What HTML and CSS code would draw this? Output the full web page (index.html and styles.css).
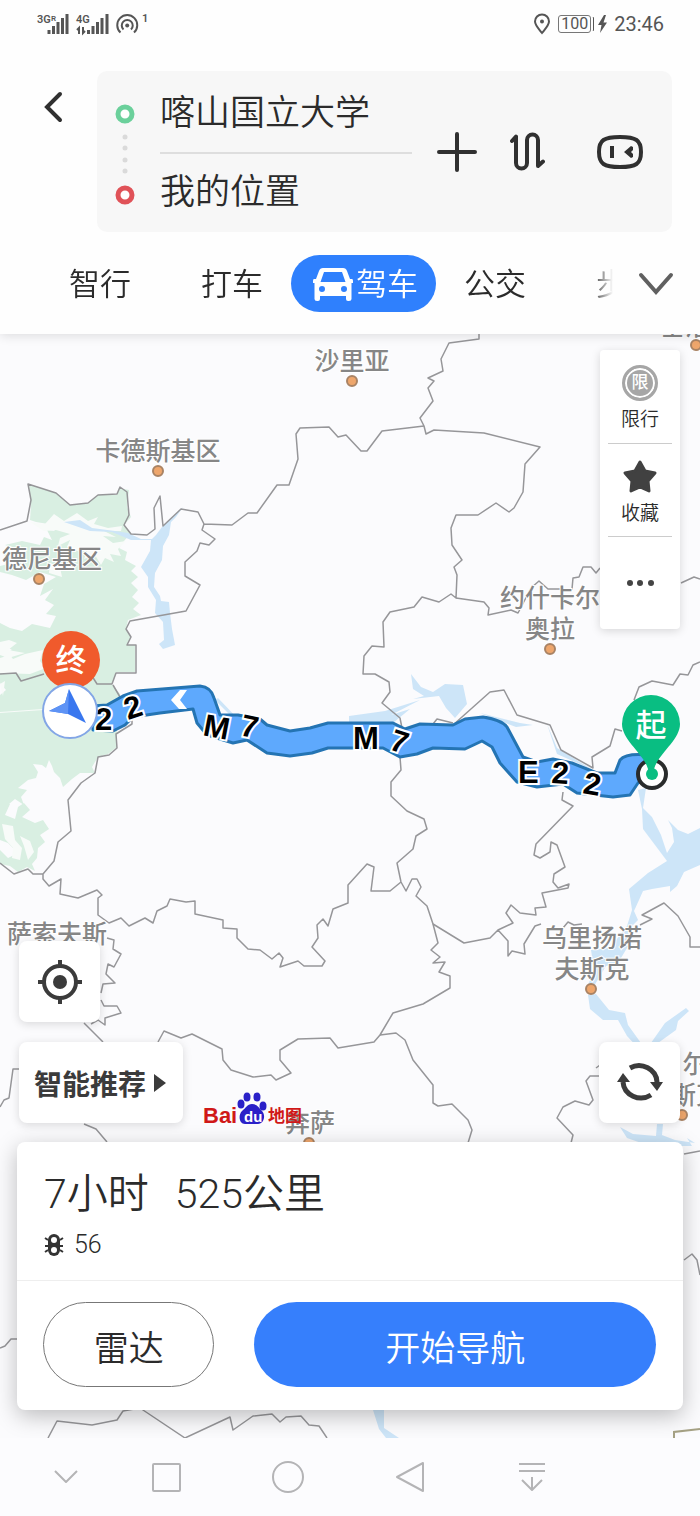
FILE: index.html
```html
<!DOCTYPE html>
<html lang="zh-CN">
<head>
<meta charset="utf-8">
<meta name="viewport" content="width=device-width, initial-scale=1">
<title>驾车路线</title>
<link rel="stylesheet" href="styles.css">
</head>
<body>
<div class="app">
  <header class="header">
    <div class="status">
      <svg class="status-left" width="112" height="26" viewBox="36 11 112 26" aria-hidden="true">
        <g class="tiny">
          <text x="37" y="23">3G</text><text x="51" y="21" class="micro">R</text>
          <text x="76" y="23">4G</text><text x="142" y="22">1</text>
        </g>
        <path class="bars" d="M49 30v4M53.500 26v8M58 22v12M62.500 18v16M67 14v20M88.500 30v4M93 26v8M97.500 22v12M102 18v16M107 14v20"/>
        <path class="thin" d="M79 34v-6l-2 2M83 27v6l2-2"/>
        <path class="wave" d="M120.500 32.500a10 10 0 1 1 13.500 0M123.500 29.500a5.500 5.500 0 1 1 7.500 0"/>
        <circle cx="127.200" cy="25.500" r="2" fill="#555"/>
      </svg>
      <div class="status-right">
        <svg width="18" height="22" viewBox="0 0 18 22" aria-hidden="true"><path class="wave" d="M9 20C5 15 2 12 2 8.500a7 7 0 0 1 14 0C16 12 13 15 9 20Z"/><circle cx="9" cy="8.500" r="2" fill="#555"/></svg>
        <span class="battery">100</span>
        <svg width="9" height="18" viewBox="0 0 9 18" aria-hidden="true"><path d="M6 0 0 10h3.500L2 18l7-10.500H5.500L8 0Z" fill="#555"/></svg>
        <span class="clock">23:46</span>
      </div>
    </div>

    <div class="search-row">
      <button class="icon-btn back" aria-label="返回"><svg width="20" height="32" viewBox="0 0 20 32"><path class="dark-line" d="M16 3 3 16l13 13"/></svg></button>
      <form class="search">
        <svg class="ends" width="22" height="106" viewBox="0 0 22 106" aria-hidden="true">
          <circle cx="11" cy="15" r="7" fill="#fff" stroke="#6bd09b" stroke-width="5"/>
          <g fill="#dadada"><circle cx="11" cy="38" r="2.500"/><circle cx="11" cy="49" r="2.500"/><circle cx="11" cy="61" r="2.500"/><circle cx="11" cy="72" r="2.500"/></g>
          <circle cx="11" cy="96" r="7" fill="#fff" stroke="#e05258" stroke-width="5"/>
        </svg>
        <div class="fields">
          <input aria-label="起点" value="喀山国立大学">
          <input aria-label="终点" value="我的位置">
        </div>
        <button type="button" class="icon-btn" aria-label="添加途经点"><svg width="40" height="40" viewBox="0 0 40 40"><path class="dark-line" d="M20 2v36M2 20h36"/></svg></button>
        <button type="button" class="icon-btn" aria-label="交换起终点"><svg width="36" height="40" viewBox="0 0 36 40"><path d="M2 9 6 4.500V31a5.500 5.500 0 0 0 11 0V8a5.500 5.500 0 0 1 11 0V34l5-4.500" fill="none" stroke="#303030" stroke-width="4" stroke-linecap="round" stroke-linejoin="round"/></svg></button>
        <button type="button" class="icon-btn" aria-label="语音助手"><svg width="48" height="36" viewBox="0 0 48 36"><path d="M24 3C40 3 45 6 45 18S40 33 24 33 3 30 3 18 8 3 24 3Z" fill="none" stroke="#303030" stroke-width="4"/><path d="M14 12h4v12h-4zM37 13v3l-2 2 2 2v3l-2 1-7-6 7-6Z" fill="#303030"/></svg></button>
      </form>
    </div>

    <nav class="tabs-row">
      <div class="tabs">
        <button class="tab">智行</button>
        <button class="tab">打车</button>
        <button class="tab active"><svg width="40" height="34" viewBox="0 0 40 34" aria-hidden="true"><path fill="#fff" fill-rule="evenodd" d="M10 0H30Q33 0 34 3L37 11H39Q40 11 40 13V15H38.500V31Q38.500 33 36 33H35Q33 33 33 31V28H7V31Q7 33 5 33H4Q1.500 33 1.500 31V15H0V13Q0 11 1 11H3L6 3Q7 0 10 0ZM11 4 7.500 14H32.500L29 4ZM9 18A3 3 0 1 0 9 24 3 3 0 1 0 9 18ZM31 18A3 3 0 1 0 31 24 3 3 0 1 0 31 18Z"/></svg>驾车</button>
        <button class="tab">公交</button>
        <button class="tab">步行</button>
      </div>
      <button class="icon-btn" aria-label="更多方式"><svg width="38" height="26" viewBox="0 0 38 26"><path d="m4 4 15 17L34 4" fill="none" stroke="#606060" stroke-width="4" stroke-linecap="round"/></svg></button>
    </nav>
  </header>

  <main class="map">
    <svg class="map-canvas" viewBox="0 334 700 1104" preserveAspectRatio="xMidYMin slice" role="img" aria-label="路线地图">
      <path class="forest" d="M29 484 56 493 70 505 88 503 98 495 117 495 119 488 129 490 127 507 131 517 124 525 131 533 124 541 119 548 127 552 125 560 136 566 131 571 138 577 131 583 138 590 132 597 139 603 133 609 141 615 128 620 126 629 131 637 127 645 135 645V672H116L112 684 120 694V702L117 712V747L108 754 98 757 92 767 95 773 80 773 72 779 63 787 60 778 54 772 52 766 49 760 46 768 42 765 33 764 38 772 36 778 28 780 18 788 27 790 21 797 24 805 15 799 9 804 4 813 0 815V695L6 690 0 683V655L12 650 0 642V623L10 628 22 631 32 624 50 628 56 616 46 614 54 605 45 600 53 589 40 596 44 584 56 577 40 572 26 580 12 575 0 572V566L12 563 2 553 20 550 5 545 22 541 40 545 44 537 52 540 47 530 55 531 48 524 36 522 30 520 31 505Z"/>
      <path class="clear" d="M30 522 45 524 54 514 64 521 77 513 88 521 98 517 94 524 108 528 122 526 121 531 104 531 116 537 103 536 113 543 126 541 118 549 121 556 110 554 114 562 105 558 101 565 95 555 84 559 88 549 80 552 67 547 70 540 58 546 60 538 70 534 56 530 44 531ZM90 533 98 537 92 543ZM0 658 10 655 13 659 25 654 43 650 40 661 46 668 30 674 0 673ZM0 684 5 681 3 696ZM0 642 9 640 17 643 8 650 25 653 8 658 0 655ZM50 563 60 567 62 577 49 573Z"/>
      <path class="forest" d="M0 803 10 804 5 815 15 819 18 807 24 803 30 810 22 817 35 823 43 820 49 829 40 835 45 842 38 848 37 858 32 864 35 871 27 867 18 872 10 866 0 864V850L8 858 18 853 8 843 0 840Z"/>
      <path class="clear" d="M2 824 13 826 15 840 22 848 20 860 12 858 13 848 5 839ZM20 836 30 841 34 852 28 860 24 846ZM0 712 43 709V710L0 713Z"/>
      <path class="river" d="M64 522 80 520 92 528 115 531 128 533 141 539 152 539 156 535 162 527 183 507 176 517 171 522 169 535 163 546 162 560 155 573 154 587 160 596 161 601 169 602 170 613 172 629 175 645 163 649 159 644 164 640 163 622 155 613 156 600 148 587 148 577 141 567 150 551 151 540 131 540 112 532 90 531Z"/>
      <path class="river" d="M411 674 421 687 433 692 445 684 463 685 467 704 455 718 446 708 439 696 413 699 424 696 413 689ZM349 716 385 711 420 700 391 715 410 709 393 723H349ZM480 713 520 723 533 725 516 727ZM547 724 557 748 593 770 557 754ZM218 698 240 721 237 722 215 700ZM638 790 646 788 643 808 652 817 661 835 667 853 674 842 672 828 668 820 678 830 688 834 700 828V865L684 872 677 886 670 892V886L652 889 643 891 639 900 634 911 638 920 628 930 630 943 618 963 606 966 594 986 588 985 594 970 591 950 610 948 627 926 632 910 629 889 648 873 667 861 643 829 642 809Z"/>
      <path class="river" d="M588 995 596 994 609 1010 625 1013 628 1025 646 1050 665 1023 686 1008 689 1011 678 1021 676 1030 658 1043 640 1050 627 1036 618 1020 603 1020 590 1009ZM620 1127 633 1134 656 1136 657 1124 663 1124 662 1135 675 1140 695 1143 687 1138 692 1146H650L627 1138ZM373 1410H384V1428L399 1438H386L379 1429Z"/>
      <path class="border" d="M479 334V339L449 343 441 359 443 371 428 378 434 381 428 388 433 401 420 418 424 426 426 434 434 430 484 433 540 447 525 464 523 492 514 508 509 512 496 503 478 515H456L451 528 452 545 462 560 454 567 457 575 456 598 451 594 439 602 422 597 414 607 390 612 383 622 384 647 372 646 364 656 363 674 375 674 389 682 390 692 382 703 400 718 402 728M400 757 401 770 391 782V796L407 811 424 819 427 829 416 836 413 849 397 863 401 882 406 891 412 879 417 879 421 887 416 896 427 906 433 924 438 943 431 950 440 957 433 963 445 962 439 972 450 976V988L423 1004 393 1013 380 1035 374 1042 338 1048 330 1038 298 1039 280 1050 280 1060 291 1073 276 1080 271 1075 253 1077 231 1070 223 1060 222 1049 192 1034 181 1038 164 1031 158 1042"/>
      <path class="border" d="M424 426 382 431 367 451 361 451 346 435 338 437 329 427 300 428 296 434 298 459 289 485 277 485 257 513 248 513 232 525 204 524 198 512 181 509 163 526 160 496 154 508 155 529 147 535 131 534 124 525 129 515 127 492 120 487 117 494 98 495 88 503 70 505 56 493 28 484 31 500 27 521 0 530M204 524 202 530 215 539 209 545 200 543 197 551 185 562V576L200 585 186 611 130 621 126 629 131 637 127 645 136 645V673H116L112 684H97L92 676M113 685 120 697M132 717V724L116 734 117 748 109 755 98 757 95 773 81 783 68 800 71 831 58 842 54 861 43 874 43 879 49 886 61 879 60 894 78 898 97 890 102 895 98 898 98 915 109 923 121 918 129 926 145 918 153 923 157 911 167 906 170 899 186 902 195 901 195 914 223 920 223 928 237 929 237 938 248 949 260 950 272 959 279 953 283 958 280 967 298 961 304 966H322L325 961 312 947 318 938 317 925 323 919 328 926 333 909 348 903V885L367 864 374 867 371 891H390L401 882M0 863 14 874 28 869 33 874H43M0 674 16 673 21 681 44 674"/>
      <path class="border" d="M456 598 484 602 489 608 488 615 511 610 518 613 531 588 539 581 548 589 572 589 573 578 579 577 583 567 591 567 596 573 600 568M681 583 694 577 700 579M634 700 639 687 652 681 673 685 680 674 688 675 693 665 700 662M453 725 490 692 504 690 517 715 550 725 561 750 593 768 592 757 610 746 615 729 622 731M433 724 437 719 453 723M563 792 562 800 573 806 536 844 534 855 540 858 550 852 551 842 557 845 565 867 554 874 553 882 558 888 569 884 568 888 542 893 546 907 535 908 536 915 520 913 511 905 506 913 513 923 498 930 508 941 508 956 512 951 525 954 524 944 535 926 541 924M498 930 490 938 464 943 433 924M563 928 568 922 574 925 582 924M640 925 652 919 642 915 664 903 678 916 690 937V947H700M380 1035 396 1033 405 1040 413 1060 433 1085 433 1103 438 1106 452 1104 468 1120 472 1130 468 1143M600 1076H590L586 1081 593 1100 589 1105 575 1101 563 1107 557 1118 573 1135 571 1143M600 1065 596 1068"/>
      <path class="border" d="M107 938 114 940 113 949 121 954 114 967 108 964 106 974 115 983 103 984 101 993M101 1000 104 1006 117 1006 121 1013 105 1018V1025L98 1020 91 1024M84 1023 103 1042M0 1107 4 1100 9 1098 13 1069H20M84 1124 96 1129 107 1142M0 1348 5 1346 11 1339H17M684 1260 692 1254 697 1260 700 1275M684 1154 700 1151M48 1438 57 1421 92 1425 117 1420 123 1411 140 1408 185 1438 230 1417 233 1430 253 1416 272 1414 280 1422 286 1417 301 1416 309 1425 319 1426 327 1438"/>
      <path d="M674 1438V1432L700 1429" fill="none" stroke="#a5a184" stroke-width="2"/>

      <path class="route" d="M92 706 107 705 123 696 137 691 200 686Q211 687 214 698L220 715 238 715 260 719 267 725 290 731 310 728 328 723 393 723 405 729 420 724 453 725 465 719 483 717Q502 720 507 727L523 757 537 762 553 759 572 763 597 773 615 773 620 760Q626 753 647 755L652 772 638 783 630 795 613 797 577 793 563 784 537 787 517 782 500 763 492 747 482 741 465 749 433 748 417 754 400 757 383 748 328 748 312 753 290 756 267 753 247 740 233 743 207 735 197 723 193 709 160 713 133 717 125 725 113 731 93 730Z"/>
      <path d="M180 690h7l-7 10 7 9h-8l-8-9Z" fill="#fff"/>
      <g class="road">
        <text x="95" y="730">2</text>
        <text transform="translate(128 720) rotate(-18)">2</text>
        <text transform="translate(202 735) rotate(11)">M</text>
        <text transform="translate(239 735) rotate(12)">7</text>
        <text x="353" y="749">M</text>
        <text transform="translate(388 749) rotate(18)">7</text>
        <text x="518" y="783">E</text>
        <text transform="translate(551 783) rotate(4)">2</text>
        <text transform="translate(582 793) rotate(10)">2</text>
      </g>

      <g class="place">
        <text x="352" y="370">沙里亚</text>
        <text x="158" y="460">卡德斯基区</text>
        <text x="52" y="568">德尼基区</text>
        <text x="550" y="607">约什卡尔</text><text x="550" y="638">奥拉</text>
        <text x="57" y="943">萨索夫斯</text>
        <text x="592" y="947">乌里扬诺</text><text x="592" y="978">夫斯克</text>
        <text x="310" y="1132">奔萨</text>
        <text x="695" y="1073">尔</text><text x="696" y="1104">斯克</text>
        <text x="685" y="335">基洛</text>
      </g>
      <g class="town"><circle cx="352" cy="381" r="5"/><circle cx="158" cy="471" r="5"/><circle cx="39" cy="579" r="5"/><circle cx="550" cy="649" r="5"/><circle cx="591" cy="989" r="5"/><circle cx="309" cy="1143" r="5"/><circle cx="682" cy="1115" r="5"/><circle cx="696" cy="345" r="5"/></g>

      <circle cx="71" cy="660" r="29" fill="#f05a2c"/>
      <text class="pin-text" x="71" y="671">终</text>
      <circle cx="70" cy="711" r="27" fill="#fff" stroke="#83a6e6" stroke-width="2"/>
      <path d="M69 689 86 723 68 714 49 711 65 703Z" fill="#3977ef"/>
      <path d="M69 689 68 714 49 711 65 703Z" fill="#5e93f5"/>
      <circle cx="652" cy="774" r="14" fill="#fff" stroke="#292b2c" stroke-width="4"/>
      <path d="M651 695a29 29 0 0 0-29 29c0 16 22 30 26 45v6h6v-6c4-15 26-29 26-45a29 29 0 0 0-29-29Z" fill="#09be82"/>
      <circle cx="652" cy="774" r="6" fill="#09be82"/>
      <text class="pin-text" x="651" y="736">起</text>

      <g class="logo">
        <text x="203" y="1123">Bai</text>
        <g fill="#2a20c8"><ellipse cx="241" cy="1104" rx="3.500" ry="4.500"/><ellipse cx="247" cy="1097" rx="3.500" ry="4.500"/><ellipse cx="257" cy="1097" rx="3.500" ry="4.500"/><ellipse cx="263" cy="1106" rx="3.500" ry="4.500"/><path d="M252 1104c5 0 7 4 10 7 4 4 2 13-4 13h-13c-6 0-7-9-3-13 4-3 5-7 10-7Z"/></g>
        <text class="du" x="244" y="1122">du</text>
        <text class="ditu" x="268" y="1122">地图</text>
      </g>
    </svg>

    <aside class="tools">
      <button class="tool"><span class="limit" aria-hidden="true">限</span>限行</button>
      <button class="tool"><svg width="36" height="36" viewBox="0 0 36 36" aria-hidden="true"><path d="m18 3 5 9 10 2-7 8 1 10-9-4-9 4 1-10-7-8 10-2Z" fill="#414141" stroke="#414141" stroke-width="3" stroke-linejoin="round"/></svg>收藏</button>
      <button class="tool" aria-label="更多"><svg width="28" height="8" viewBox="0 0 28 8"><g fill="#444"><circle cx="4" cy="4" r="3"/><circle cx="14" cy="4" r="3"/><circle cx="25" cy="4" r="3"/></g></svg></button>
    </aside>

    <div class="bottom">
      <button class="float square" aria-label="定位"><svg width="44" height="44" viewBox="0 0 44 44"><circle cx="22" cy="22" r="16" fill="none" stroke="#3b3b3b" stroke-width="4"/><path d="M22 0v8M22 36v8M0 22h8M36 22h8" stroke="#3b3b3b" stroke-width="4"/><circle cx="22" cy="22" r="7" fill="#3b3b3b"/></svg></button>
      <div class="float-row">
        <button class="float prefer">智能推荐<svg width="12" height="20" viewBox="0 0 12 20" aria-hidden="true"><path d="m0 1 12 9-12 9Z" fill="#3b3b3b"/></svg></button>
        <button class="float square" aria-label="刷新"><svg width="46" height="42" viewBox="0 0 46 42"><path d="M13 6A18 17 0 0 1 40 20M34 33A18 17 0 0 1 6 20" fill="none" stroke="#3b3b3b" stroke-width="5"/><path d="M33 20h13l-6 9ZM0 20 6 11l7 9Z" fill="#3b3b3b"/></svg></button>
      </div>
      <section class="card">
        <div class="summary">
          <h1 class="total"><span>7小时</span><span>525公里</span></h1>
          <p class="lights"><svg width="20" height="22" viewBox="0 0 20 22" aria-hidden="true"><path d="M1 4l3 2M19 4l-3 2M1 12h3M19 12h-3M1 18l3-2M19 18l-3-2" stroke="#333" stroke-width="2"/><rect x="4" y="0" width="12" height="22" rx="6" fill="#333"/><circle cx="10" cy="6" r="3" fill="#fff"/><circle cx="10" cy="16" r="3" fill="#fff"/></svg>56</p>
        </div>
        <div class="actions">
          <button class="pill radar">雷达</button>
          <button class="pill start">开始导航</button>
        </div>
      </section>
    </div>
  </main>

  <nav class="sysbar" aria-label="系统导航">
    <button class="icon-btn" aria-label="收起"><svg width="34" height="34" viewBox="0 0 34 34"><path class="sys" d="m6 11 11 11 11-11"/></svg></button>
    <button class="icon-btn" aria-label="最近任务"><svg width="34" height="34" viewBox="0 0 34 34"><rect class="sys" x="4" y="4" width="27" height="27" rx="1"/></svg></button>
    <button class="icon-btn" aria-label="主页"><svg width="34" height="34" viewBox="0 0 34 34"><circle class="sys" cx="17" cy="17" r="15"/></svg></button>
    <button class="icon-btn" aria-label="后退"><svg width="34" height="34" viewBox="0 0 34 34"><path class="sys" d="M30 3v28L4 17Z"/></svg></button>
    <button class="icon-btn" aria-label="通知"><svg width="34" height="34" viewBox="0 0 34 34"><path class="sys" d="M4 4h26M4 11h26M17 17v13M7 20l10 10 10-10"/></svg></button>
  </nav>
</div>
</body>
</html>
```
FILE: styles.css
```css
* { box-sizing: border-box; }
body {
  margin: 0;
  font-family: Roboto, "Noto Sans CJK SC", sans-serif;
  font-weight: 350;
  color: #2b2b2b;
  background: #fcfcfe;
}
button, input {
  font: inherit;
  color: inherit;
  border: 0;
  padding: 0;
  margin: 0;
  background: none;
}
.app { min-height: 100vh; display: flex; flex-direction: column; }
.icon-btn { display: flex; align-items: center; justify-content: center; flex: none; }
.dark-line { fill: none; stroke: #303030; stroke-width: 4; stroke-linecap: round; }

.header {
  position: relative;
  z-index: 1;
  background: #fefefe;
  box-shadow: 0 2px 10px rgba(0, 0, 0, .12);
  padding-bottom: 22px;
}
.status {
  height: 48px;
  padding: 0 36px;
  display: flex;
  align-items: center;
  justify-content: space-between;
  color: #555;
}
.status-right { display: flex; align-items: center; gap: 7px; font-weight: 400; }
.tiny { font-size: 11px; font-weight: 600; fill: #555; }
.micro { font-size: 8px; }
.bars { stroke: #555; stroke-width: 3; fill: none; }
.thin { stroke: #555; stroke-width: 2; fill: none; }
.wave { stroke: #555; stroke-width: 2; fill: none; }
.battery {
  font-size: 16px;
  line-height: 16px;
  border: 1px solid #777;
  border-radius: 3px;
  padding: 0 2px;
  box-shadow: 3px 0 0 -1px #fefefe, 5px 0 0 -2px #555;
}
.clock { font-size: 20px; }

.search-row { display: flex; padding: 23px 28px 0 44px; align-items: flex-start; }
.back { width: 20px; margin: 20px 33px 0 0; }
.search {
  flex: 1;
  min-width: 0;
  height: 161px;
  display: flex;
  align-items: center;
  background: #f7f7f7;
  border-radius: 10px;
  padding: 0 28px 0 17px;
}
.search .icon-btn + .icon-btn { margin-left: 33px; }
.search .icon-btn:last-child { margin-left: 50px; }
.ends { flex: none; }
.fields { flex: 1; min-width: 0; margin: 0 25px 0 24px; }
.fields input { display: block; width: 100%; height: 76px; padding-bottom: 4px; font-size: 35px; outline: 0; }
.fields input:first-child { padding-bottom: 8px; }
.fields input + input { border-top: 2px solid #dedede; }

.tabs-row {
  display: flex;
  align-items: center;
  justify-content: space-between;
  padding: 23px 25px 0 69px;
}
.tabs {
  flex: 1;
  display: flex;
  overflow: hidden;
  margin-right: 24px;
  mask-image: linear-gradient(to right, #000 96%, transparent);
}
.tab { flex: none; height: 57px; padding-top: 2px; font-size: 31px; line-height: 55px; white-space: nowrap; }
.tab + .tab { margin-left: 70px; }
.tab + .tab.active {
  display: flex;
  align-items: center;
  gap: 3px;
  margin: 0 28px;
  padding: 2px 18px 0 22px;
  border-radius: 29px;
  background: #2f80fd;
  color: #fff;
}
.tab.active + .tab { margin-left: 0; }

.map {
  position: relative;
  flex: 1;
  display: flex;
  flex-direction: column;
  overflow: hidden;
  background: #fbfbfd;
}
.map-canvas { position: absolute; inset: 0; width: 100%; height: 100%; }
.forest { fill: #d9efe2; }
.clear { fill: #f8fbf9; }
.river { fill: #cde5f8; }
.border { fill: none; stroke: #969699; stroke-width: 1.5; stroke-linejoin: round; }
.route { fill: #5ea9fd; stroke: #2474b3; stroke-width: 3; stroke-linejoin: round; }
.road { font: bold 31px "Liberation Sans", sans-serif; fill: #000; stroke: #fff; stroke-width: 4; paint-order: stroke; }
.place {
  font: 500 25px "Noto Sans CJK SC", sans-serif;
  fill: #868686;
  stroke: #fff;
  stroke-width: 2;
  paint-order: stroke;
  text-anchor: middle;
}
.town { fill: #eea66c; stroke: #a98364; stroke-width: 2; }
.pin-text { font: 500 31px "Noto Sans CJK SC", sans-serif; fill: #fff; text-anchor: middle; }
.logo { font: bold 22px "Liberation Sans", sans-serif; fill: #d01818; }
.du { font-size: 15px; fill: #fff; }
.ditu { font: 700 17px "Noto Sans CJK SC", sans-serif; }

.tools {
  position: relative;
  align-self: flex-end;
  width: 80px;
  margin: 16px 20px 0 0;
  padding: 0 8px;
  background: #fff;
  border-radius: 4px;
  box-shadow: 0 2px 10px rgba(0, 0, 0, .15);
}
.tool {
  width: 100%;
  height: 93px;
  padding-top: 6px;
  display: flex;
  flex-direction: column;
  align-items: center;
  justify-content: center;
  gap: 5px;
  font-size: 19px;
  line-height: 28px;
}
.tool:last-child { padding-top: 0; }
.tool + .tool { border-top: 1px solid #ccc; }
.limit {
  width: 36px;
  height: 36px;
  border-radius: 50%;
  border: 3px solid #a6a6a6;
  box-shadow: inset 0 0 0 2px #fff;
  background: #a6a6a6;
  color: #fff;
  font-size: 17px;
  font-weight: 500;
  line-height: 29px;
}

.bottom { position: relative; margin-top: auto; padding: 0 17px 28px; display: flex; flex-direction: column; }
.float {
  height: 81px;
  display: flex;
  align-items: center;
  justify-content: center;
  background: #fff;
  border-radius: 8px;
  box-shadow: 0 2px 10px rgba(0, 0, 0, .14);
}
.square { width: 81px; margin-left: 2px; }
.float-row { display: flex; justify-content: space-between; padding: 20px 3px 19px 2px; }
.prefer { padding: 0 17px 0 15px; gap: 8px; font-size: 28px; font-weight: 700; color: #3b3b3b; }
.card { background: #fff; border-radius: 8px; box-shadow: 0 6px 22px rgba(0, 0, 0, .25); }
.summary { padding: 22px 27px 18px; border-bottom: 1px solid #eee; }
.total { margin: 0; display: flex; gap: 26px; font-size: 41px; font-weight: 350; line-height: 60px; }
.lights { margin: 4px 0 0; display: flex; align-items: center; gap: 10px; font-size: 25px; line-height: 34px; }
.actions { display: flex; gap: 40px; padding: 21px 27px 23px 26px; }
.pill { height: 85px; border-radius: 43px; padding-top: 2px; font-size: 35px; }
.radar { flex: 170; border: 1px solid #777; }
.start { flex: 403; background: #367ffc; color: #fff; }

.sysbar { height: 78px; display: flex; align-items: center; padding-left: 49px; gap: 88px; background: #fcfcfe; }
.sysbar .icon-btn:first-child { margin-right: -22px; }
.sys { fill: none; stroke: #b4b4b6; stroke-width: 2; stroke-linejoin: round; }
```
